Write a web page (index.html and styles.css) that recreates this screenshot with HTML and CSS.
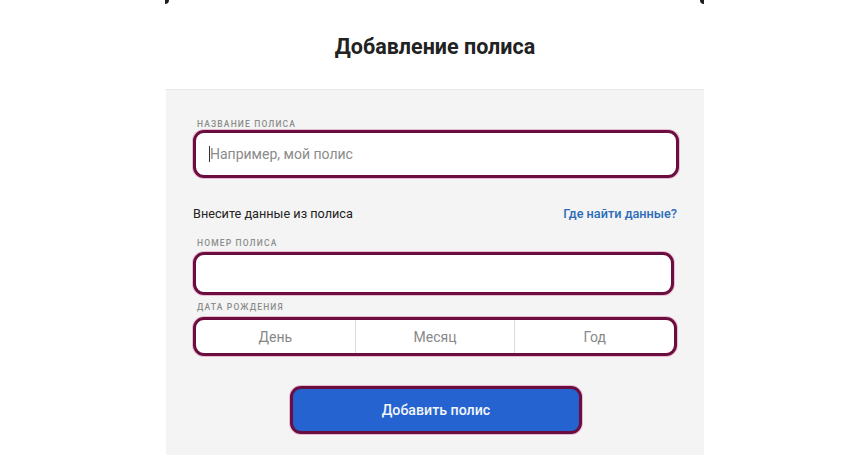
FILE: index.html
```html
<!DOCTYPE html>
<html lang="ru">
<head>
<meta charset="utf-8">
<title>Добавление полиса</title>
<link rel="stylesheet" href="styles.css">
</head>
<body>
<div class="card">
  <span class="corner corner-left"></span>
  <span class="corner corner-right"></span>
  <header class="card-header">
    <h1 class="title">Добавление полиса</h1>
  </header>
  <form class="panel">
    <label class="label label-first">Название полиса</label>
    <div class="field field-name">
      <span class="caret"></span>
      <span class="placeholder">Например, мой полис</span>
    </div>
    <div class="row">
      <span class="row-text">Внесите данные из полиса</span>
      <a class="link">Где найти данные?</a>
    </div>
    <label class="label label-number">Номер полиса</label>
    <div class="field field-number"></div>
    <label class="label label-date">Дата рождения</label>
    <div class="field field-date">
      <span class="date-part">День</span>
      <span class="date-part">Месяц</span>
      <span class="date-part">Год</span>
    </div>
    <button type="button" class="button">Добавить полис</button>
  </form>
</div>
</body>
</html>
```
FILE: styles.css
```css
* { box-sizing: border-box; }
html, body { margin: 0; padding: 0; background: #fff; }
body {
  font-family: Roboto, "Noto Sans", "Liberation Sans", sans-serif;
  color: #222;
  height: 455px;
  overflow: hidden;
}
.card {
  position: relative;
  width: 538px;
  margin-left: 166px;
  height: 455px;
  display: flex;
  flex-direction: column;
  background: #fff;
}
.corner {
  position: absolute;
  top: 0;
  width: 4px;
  height: 4px;
  background: #1e1e1e;
}
.corner-left { left: -1px; border-bottom-right-radius: 4px; }
.corner-right { right: 0; border-bottom-left-radius: 4px; }
.card-header {
  height: 89px;
  display: flex;
  align-items: center;
  justify-content: center;
  padding-top: 3px;
}
.title {
  margin: 0;
  font-size: 21.5px;
  font-weight: 700;
  color: #222;
}
.panel {
  flex: 1;
  background: #f4f4f4;
  border-top: 1px solid #e6e6e6;
  padding: 29px 25px 0 27px;
  display: flex;
  flex-direction: column;
}
.label {
  display: block;
  font-size: 8.5px;
  line-height: 10px;
  font-weight: 500;
  letter-spacing: 1.15px;
  text-transform: uppercase;
  color: #8c8c8c;
  padding-left: 4px;
}
.field {
  background: #fff;
  border: 3px solid #6b0d3e;
  border-radius: 11px;
  box-shadow: 0 0 0 1px rgba(214, 120, 170, 0.45);
  display: flex;
  align-items: center;
}
.field-name { margin-top: 1px; height: 48px; padding-left: 13px; }
.caret { width: 1px; height: 16px; background: #333; }
.placeholder { font-size: 14px; color: #8a8a8a; }
.row {
  margin-top: 28px;
  display: flex;
  justify-content: space-between;
  align-items: center;
  line-height: 16px;
  padding-right: 2px;
}
.row-text { font-size: 12.7px; color: #222; }
.link { font-size: 12.7px; color: #2b6cb8; font-weight: 500; }
.label-number { margin-top: 16px; }
.field-number { margin-top: 4px; height: 43px; margin-right: 5px; }
.label-date { margin-top: 7px; }
.field-date { margin-top: 5px; height: 39px; margin-right: 2px; align-items: stretch; }
.date-part {
  flex: 1;
  display: flex;
  align-items: center;
  justify-content: center;
  font-size: 14px;
  color: #888;
}
.date-part + .date-part { border-left: 1px solid #dcdcdc; }
.button {
  margin: 30px auto 0;
  width: 292px;
  height: 48px;
  background: #2463d0;
  border: 3px solid #6b0d3e;
  border-radius: 11px;
  box-shadow: 0 0 0 1px rgba(214, 120, 170, 0.45);
  color: #f4f6fb;
  font-family: inherit;
  font-size: 14.2px;
  font-weight: 500;
  position: relative;
  left: 0;
}
```
